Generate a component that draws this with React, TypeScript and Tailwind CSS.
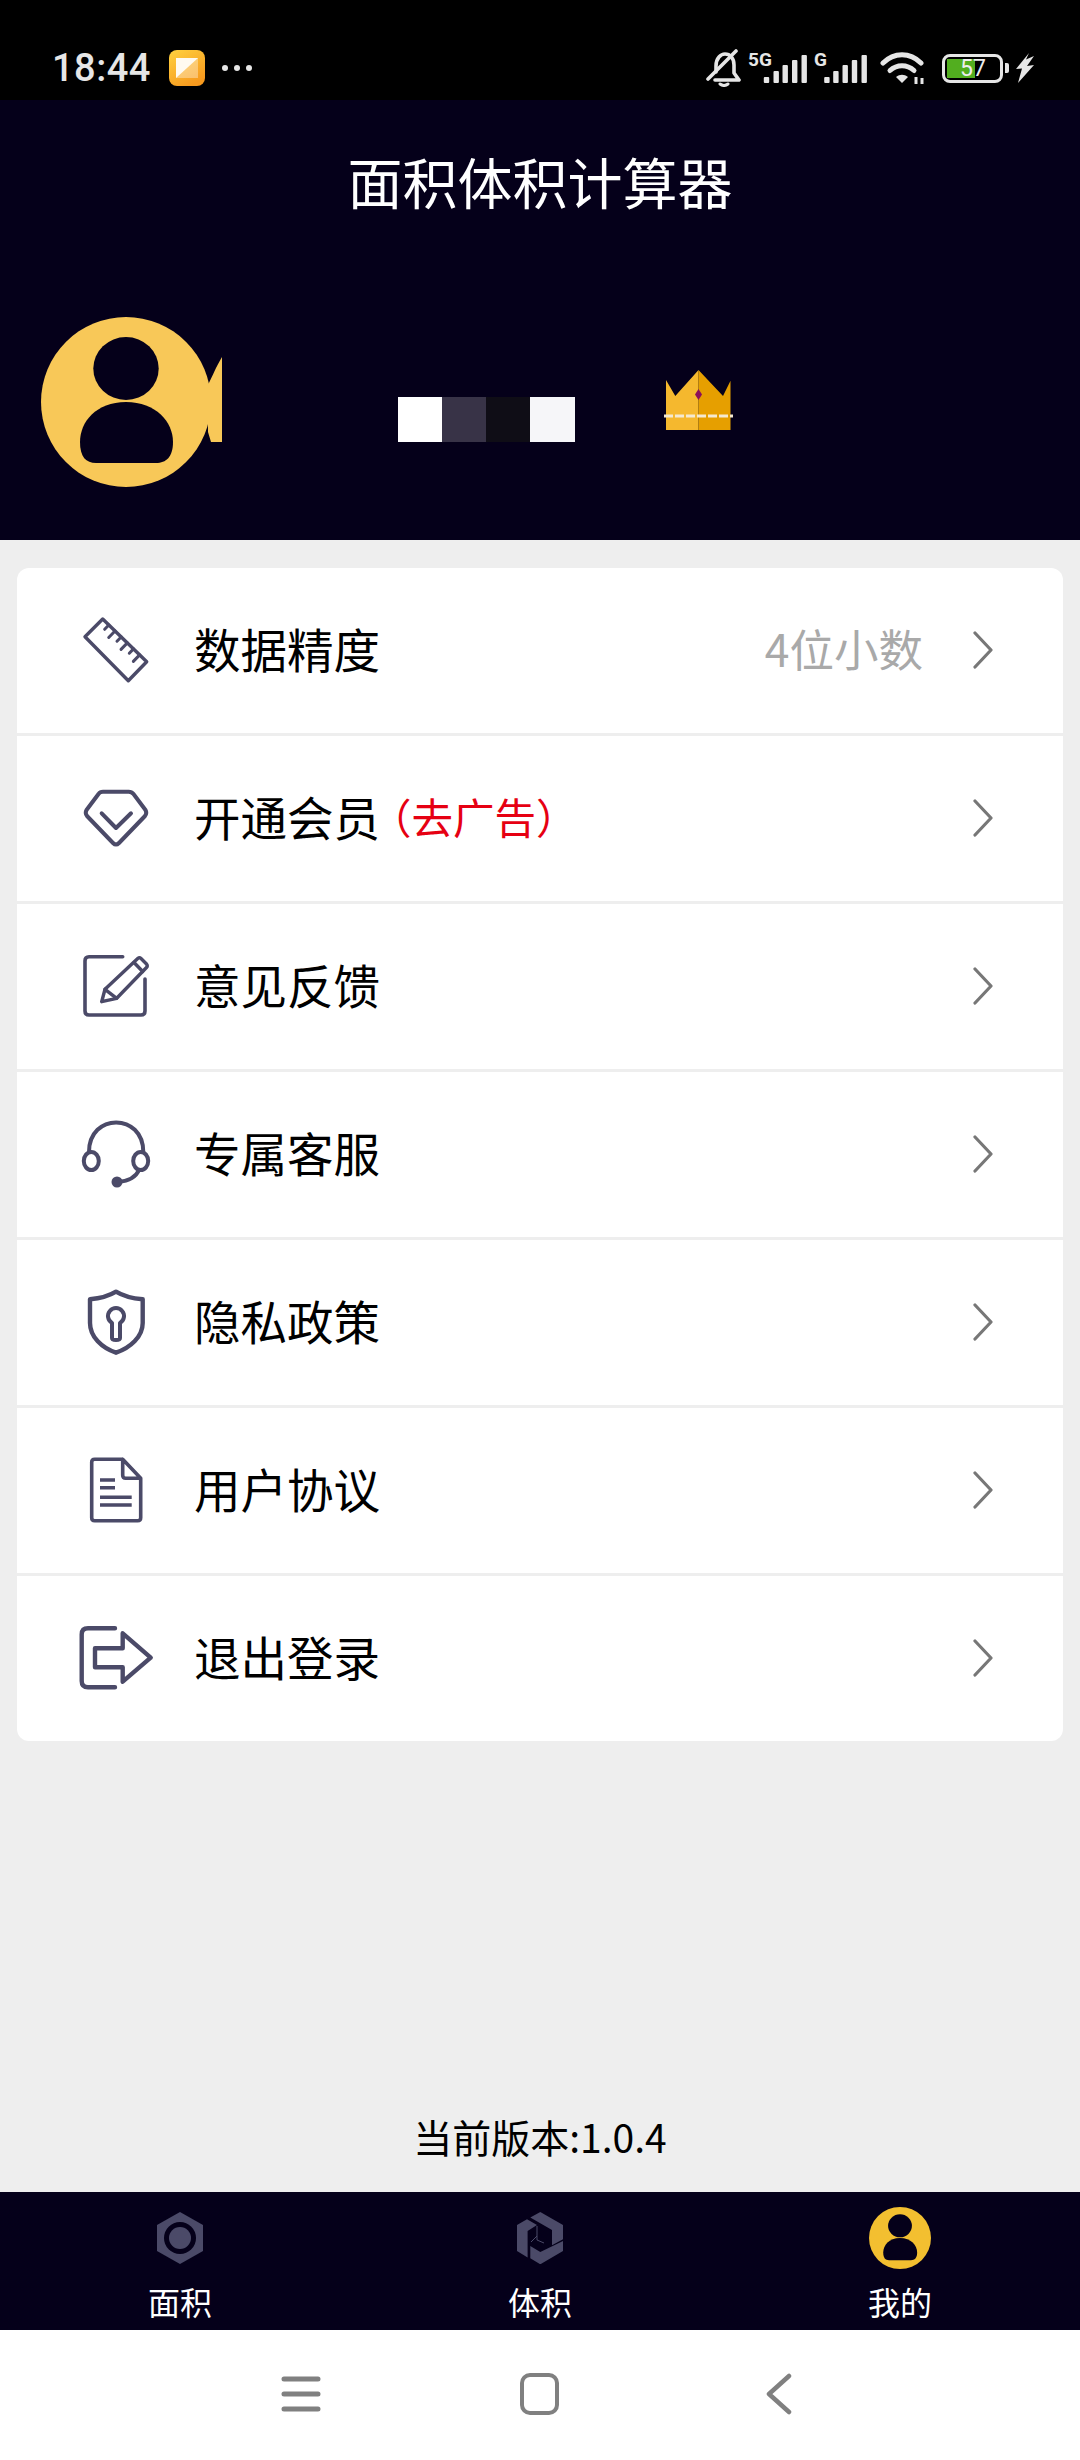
const cjk = "font-['Noto_Sans_CJK_SC','Noto_Sans',sans-serif]";

// stroke colour of the list icons, same purple as the tab bar icons
const ink = "#4b4a68";
const strokeProps = { fill: "none", stroke: ink, strokeWidth: 4, strokeLinecap: "round" as const, strokeLinejoin: "round" as const };

const IconBox = ({ children }: { children: React.ReactNode }) => (
  <svg viewBox="0 0 80 80" className="w-[80px] h-[80px] shrink-0">
    <g {...strokeProps}>{children}</g>
  </svg>
);

const RulerIcon = () => (
  <IconBox>
    <path d="M26.7 8 L70.7 50.7 L52.3 69.7 L9 25.7 Z" strokeWidth="3.4" />
    {[0.14, 0.28, 0.42, 0.56, 0.7, 0.84].map((t, i) => {
      const x = 26.7 + 44 * t;
      const y = 8 + 42.7 * t;
      const len = i % 2 === 0 ? 6 : 9;
      return <line key={t} x1={x} y1={y} x2={x - 0.7 * len} y2={y + 0.72 * len} strokeWidth="3" />;
    })}
  </IconBox>
);

const DiamondIcon = () => (
  <IconBox>
    <path d="M27 12.7 H52.7 Q55.7 12.7 57.5 15 L69.5 31 Q71.3 34.3 69 37 L43 64 Q40 67 37 64 L11 37 Q8.7 34.3 10.5 31 L22.5 15 Q24 12.7 27 12.7 Z" strokeWidth="4" />
    <path d="M25.7 34.3 L40 49 L55 34.3" strokeWidth="4" />
  </IconBox>
);

const EditIcon = () => (
  <IconBox>
    <path d="M46.7 9.7 H13 Q9 9.7 9 13.7 V64 Q9 68 13 68 H65 Q69 68 69 64 V32" strokeWidth="3.6" />
    <path d="M25.7 54.7 L29 42.3 L62 11.3 Q63.5 10 65 11.5 L70.5 17 Q72 19 70.5 20.5 L40.7 51.3 Z" strokeWidth="3.4" />
    <path d="M29 42.3 L40.7 51.3 M58 15.5 L66.7 24.5" strokeWidth="3.4" />
  </IconBox>
);

const HeadsetIcon = () => (
  <IconBox>
    <path d="M13 37 C13 -2.5 67.3 -2.5 67.3 37" strokeWidth="4" />
    <ellipse cx="15.3" cy="46" rx="7.5" ry="9" strokeWidth="4" />
    <ellipse cx="64.7" cy="46" rx="7.5" ry="9" strokeWidth="4" />
    <path d="M63 55 C60 62 52 66 42.3 67" strokeWidth="4" />
    <circle cx="41" cy="67" r="5.5" fill={ink} stroke="none" />
  </IconBox>
);

const ShieldIcon = () => (
  <IconBox>
    <path d="M40 8.7 C33 13 24 15.5 14 16.3 V40 C14 54 26 65 40 69.7 C54 65 66.7 54 66.7 40 V16.3 C56 15.5 47 13 40 8.7 Z" strokeWidth="4.4" />
    <path d="M36 40 A8 8 0 1 1 44 40 V55 Q44 57 40 57 Q36 57 36 55 Z" strokeWidth="4" />
  </IconBox>
);

const DocIcon = () => (
  <IconBox>
    <path d="M46.7 8.3 H18.7 Q15.7 8.3 15.7 11.3 V66.7 Q15.7 69.7 18.7 69.7 H61.7 Q64.7 69.7 64.7 66.7 V27.3 L46.7 8.3 V24.3 Q46.7 27.3 49.7 27.3 H64.7" strokeWidth="3.6" />
    <path d="M24 29 H39 M24 36.7 H39 M24 46.3 H55.7 M24 54 H55.7" strokeWidth="3.4" strokeLinecap="butt" />
  </IconBox>
);

const LogoutIcon = () => (
  <IconBox>
    <path d="M39 9.3 H12 Q5.7 9.3 5.7 15.5 V62 Q5.7 68.3 12 68.3 H39" strokeWidth="4.4" />
    <path d="M19 29.3 H46.7 V14.3 L74.7 38.7 L46.7 62.7 V48.3 H19 Z" strokeWidth="4.4" />
  </IconBox>
);

const Chevron = () => (
  <svg viewBox="0 0 20 38" className="w-[20px] h-[38px] shrink-0" fill="none" stroke="#777777" strokeWidth="3.2" strokeLinecap="round" strokeLinejoin="round">
    <path d="M2 2 L18 19 L2 36" />
  </svg>
);

const rows = [
  { id: "precision", label: "数据精度", icon: <RulerIcon />, value: "4位小数" },
  { id: "vip", label: "开通会员", icon: <DiamondIcon />, note: "（去广告）" },
  { id: "feedback", label: "意见反馈", icon: <EditIcon /> },
  { id: "service", label: "专属客服", icon: <HeadsetIcon /> },
  { id: "privacy", label: "隐私政策", icon: <ShieldIcon /> },
  { id: "terms", label: "用户协议", icon: <DocIcon /> },
  { id: "logout", label: "退出登录", icon: <LogoutIcon /> },
];

// taller than the bars so the label's line box isn't clipped, pulled back up with the negative margin
const SignalBars = ({ label, width, bars }: { label: string; width: number; bars: number[] }) => (
  <svg viewBox={`0 -8 ${width} 42`} style={{ width }} className="h-[42px] -mt-[8px] shrink-0 block">
    <text x="0" y="15" fontFamily="Roboto, sans-serif" fontSize="19" fontWeight="700" fill="#e6e6e6">{label}</text>
    {bars.map((x, i) => {
      const h = [6, 12, 18, 23, 28][i];
      return <rect key={x} x={x - 2.5} y={32 - h} width="5.4" height={h} rx="1" fill="#e6e6e6" />;
    })}
  </svg>
);

const StatusBar = () => (
  <div className="h-[100px] bg-black flex items-center shrink-0 pt-[36px] pl-[52px] pr-[46px] text-[#e6e6e6]">
    <span className="font-['Roboto',sans-serif] font-medium text-[38px] leading-none tracking-[0.5px] w-[117px]">18:44</span>
    <svg viewBox="0 0 36 36" className="w-[36px] h-[36px] shrink-0">
      <defs>
        <linearGradient id="appBg" x1="0" y1="0" x2="0.6" y2="1">
          <stop offset="0" stopColor="#ffd23f" />
          <stop offset="1" stopColor="#f79a1e" />
        </linearGradient>
      </defs>
      <rect width="36" height="36" rx="8" fill="url(#appBg)" />
      <path d="M7 8 H29 V28 H7 Z" fill="#ffffff" opacity="0.35" />
      <path d="M7 8 H29 L7 28 Z" fill="#fffaf0" />
    </svg>
    <div className="flex gap-[6px] ml-[17px]">
      <div className="w-[6px] h-[6px] rounded-full bg-[#e6e6e6]" />
      <div className="w-[6px] h-[6px] rounded-full bg-[#e6e6e6]" />
      <div className="w-[6px] h-[6px] rounded-full bg-[#e6e6e6]" />
    </div>
    <div className="ml-auto flex items-center">
      <svg viewBox="0 0 35 38" className="w-[35px] h-[38px] shrink-0" fill="none" stroke="#e6e6e6" strokeWidth="3.6" strokeLinecap="round" strokeLinejoin="round">
        <path d="M2 30 L30 2" />
        <path d="M10 23 V17 C10 9 15 5 19 5 C24 5 28 9 28 16 V24 L33 31 H9" />
        <path d="M14 35 Q18 38 22 35" strokeWidth="3" />
      </svg>
      <div className="ml-[7px]">
        <SignalBars label="5G" width={60} bars={[18.3, 28, 37, 46.5, 56]} />
      </div>
      <div className="ml-[6px]">
        <SignalBars label="G" width={53} bars={[12.7, 21.7, 31, 40.3, 50]} />
      </div>
      <svg viewBox="0 0 46 34" className="w-[46px] h-[34px] shrink-0 ml-[13px]" fill="none" stroke="#e6e6e6" strokeWidth="5" strokeLinecap="round">
        <path d="M3 12 C14 1 30 1 41 12" />
        <path d="M10 19.5 C17 13 27 13 34 19.5" />
        <path d="M16 26 C20 23 24 23 28 26 L22 32 Z" fill="#e6e6e6" stroke="none" />
        <path d="M36 26 V33 M42 27 V33" strokeWidth="3" strokeLinecap="butt" />
      </svg>
      <div className="flex items-center ml-[16px]">
        <div className="relative w-[61px] h-[29px] rounded-[8px] border-[3px] border-[#e6e6e6] p-[2px] flex">
          <div className="w-[28px] bg-[#52ae1f]" />
          <span className="absolute left-[15px] top-0 h-full flex items-center font-['Roboto',sans-serif] text-[23px] leading-none text-[#eeeeee]">57</span>
        </div>
        <div className="w-[4px] h-[10px] rounded-r-[2px] bg-[#e6e6e6] ml-[2px]" />
      </div>
      <svg viewBox="0 0 18 30" className="w-[18px] h-[30px] shrink-0 ml-[7px]" fill="#e6e6e6">
        <path d="M13 0 L0 16 L6 15.5 L2 30 L18 12 L11 13 L18 3 L10 6.5 Z" />
      </svg>
    </div>
  </div>
);

const Avatar = ({ className, color, dark }: { className: string; color: string; dark: string }) => (
  <svg viewBox="0 0 170 170" className={className}>
    <circle cx="85" cy="85" r="85" fill={color} />
    <ellipse cx="85" cy="51.5" rx="32.7" ry="31.5" fill={dark} />
    <path d="M39 125 C39 105 55 85 85 85 C115 85 132 105 132 125 C132 140 125 146 115 146 H55 C45 146 39 140 39 125 Z" fill={dark} />
  </svg>
);

const Header = () => (
  <div className="h-[440px] bg-[#05001a] shrink-0 flex flex-col">
    <h1 className={`${cjk} text-[55px] leading-none font-normal text-white text-center pt-[53px]`}>面积体积计算器</h1>
    <div className="flex items-start pl-[41px] mt-[109px]">
      <div className="flex items-start">
        <Avatar className="w-[170px] h-[170px] shrink-0" color="#f8c858" dark="#05001a" />
        <svg viewBox="0 0 14 85" className="w-[14px] h-[85px] shrink-0 mt-[40px] -ml-[3px]" fill="#f8c858">
          <path d="M14 0 C8 10 5 18 0 28 V75 L3 85 H14 Z" />
        </svg>
      </div>
      <div className="flex ml-[176px] mt-[80px]">
        <div className="w-[44px] h-[45px] bg-white" />
        <div className="w-[44px] h-[45px] bg-[#383347]" />
        <div className="w-[44px] h-[45px] bg-[#0f0d16]" />
        <div className="w-[45px] h-[45px] bg-[#f6f6f9]" />
      </div>
      <svg viewBox="-2 0 69 60" className="w-[69px] h-[60px] shrink-0 ml-[89px] mt-[53px]">
        <path d="M0 10 L9.3 26 L32.5 0 V60 H0 Z" fill="#f5b82e" />
        <path d="M32.5 0 L57 26 L64.5 10.7 V60 H32.5 Z" fill="#e69f00" />
        <path d="M32.5 19 L36 24.5 L32.5 30 L29 24.5 Z" fill="#8b0f5a" />
        <path d="M-2 46 H67" stroke="#f5e9d0" strokeWidth="3" strokeDasharray="9 2" />
      </svg>
    </div>
  </div>
);

const MenuList = () => (
  <div className="mx-[17px] mt-[28px] bg-white rounded-[12px] flex flex-col">
    {rows.map((row, i) => (
      <div key={row.id} className={i === rows.length - 1 ? "h-[165px]" : "h-[168px] border-b-[3px] border-[#eeeeee]"}>
        <div className="h-full flex items-center pl-[59px] pr-[70px]">
          {row.icon}
          <span className={`${cjk} text-[46.5px] leading-none text-black ml-[38px] mb-[5px]`}>{row.label}</span>
          {row.note && <span className={`${cjk} text-[41.5px] leading-none text-[#e60012] -ml-[10px] mb-[4px]`}>{row.note}</span>}
          {row.value && <span className={`${cjk} text-[44.5px] leading-none text-[#a9a9a9] ml-auto mr-[50px] mb-[4px]`}>{row.value}</span>}
          <div className={row.value ? "mb-[2px]" : "ml-auto mb-[2px]"}>
            <Chevron />
          </div>
        </div>
      </div>
    ))}
  </div>
);

const HexIcon = () => (
  <svg viewBox="0 0 46 52" className="w-[46px] h-[52px]">
    <path d="M23 0 L46 13 V39 L23 52 L0 39 V13 Z" fill={ink} />
    <circle cx="23" cy="26" r="16" fill="#05001a" />
    <circle cx="23" cy="26" r="11" fill={ink} />
  </svg>
);

const CubeIcon = () => (
  <svg viewBox="0 0 46 52" className="w-[46px] h-[52px]">
    <path d="M0 13 L10 7.3 L20 13 L10.6 19 V45.6 L0 39 Z" fill={ink} />
    <path d="M13.3 5.6 L23.3 0 L46 13 V27.3 L35 33.3 V18 Z" fill={ink} />
    <path d="M13.3 34 L23.3 40 L46 29 V39 L23.3 52.3 L13.3 46.3 Z" fill={ink} />
    <path d="M20 14 V28 L27 31 M20 24 L14 30" stroke={ink} strokeWidth="1" fill="none" />
  </svg>
);

const tabs = [
  { id: "area", label: "面积", icon: <HexIcon /> },
  { id: "volume", label: "体积", icon: <CubeIcon /> },
  { id: "mine", label: "我的", icon: <Avatar className="w-[62px] h-[62px]" color="#f3bf30" dark="#05001a" /> },
];

const TabBar = () => (
  <div className="h-[138px] bg-[#05001a] grid grid-cols-3 shrink-0">
    {tabs.map((tab) => (
      <div key={tab.id} className="flex flex-col items-center pt-[15px]">
        <div className="h-[62px] flex items-center justify-center">{tab.icon}</div>
        <span className={`${cjk} text-[32px] leading-none text-white mt-[16px]`}>{tab.label}</span>
      </div>
    ))}
  </div>
);

const NavBar = () => (
  <div className="h-[130px] bg-white flex items-start shrink-0 pt-[43px] pl-[281px]">
    <svg viewBox="0 0 40 42" className="w-[40px] h-[42px] shrink-0" fill="none" stroke="#808080" strokeWidth="5" strokeLinecap="round">
      <path d="M3 6 H37 M3 21 H37 M3 36 H37" />
    </svg>
    <svg viewBox="0 0 40 42" className="w-[40px] h-[42px] shrink-0 ml-[199px]" fill="none" stroke="#808080" strokeWidth="4">
      <rect x="2" y="2" width="35" height="38" rx="8" />
    </svg>
    <svg viewBox="0 0 26 42" className="w-[26px] h-[42px] shrink-0 ml-[206px]" fill="none" stroke="#808080" strokeWidth="4.5" strokeLinecap="round" strokeLinejoin="round">
      <path d="M23 3 L3 21 L23 39" />
    </svg>
  </div>
);

const App = () => {
  return (
    <div className="w-[1080px] h-[2460px] bg-[#eeeeee] flex flex-col overflow-hidden">
      <StatusBar />
      <Header />
      <div className="flex-1 flex flex-col">
        <MenuList />
        <p className={`${cjk} mt-auto mb-[36px] text-[39px] leading-none text-black text-center`}>当前版本:1.0.4</p>
      </div>
      <TabBar />
      <NavBar />
    </div>
  );
};

export default App;
